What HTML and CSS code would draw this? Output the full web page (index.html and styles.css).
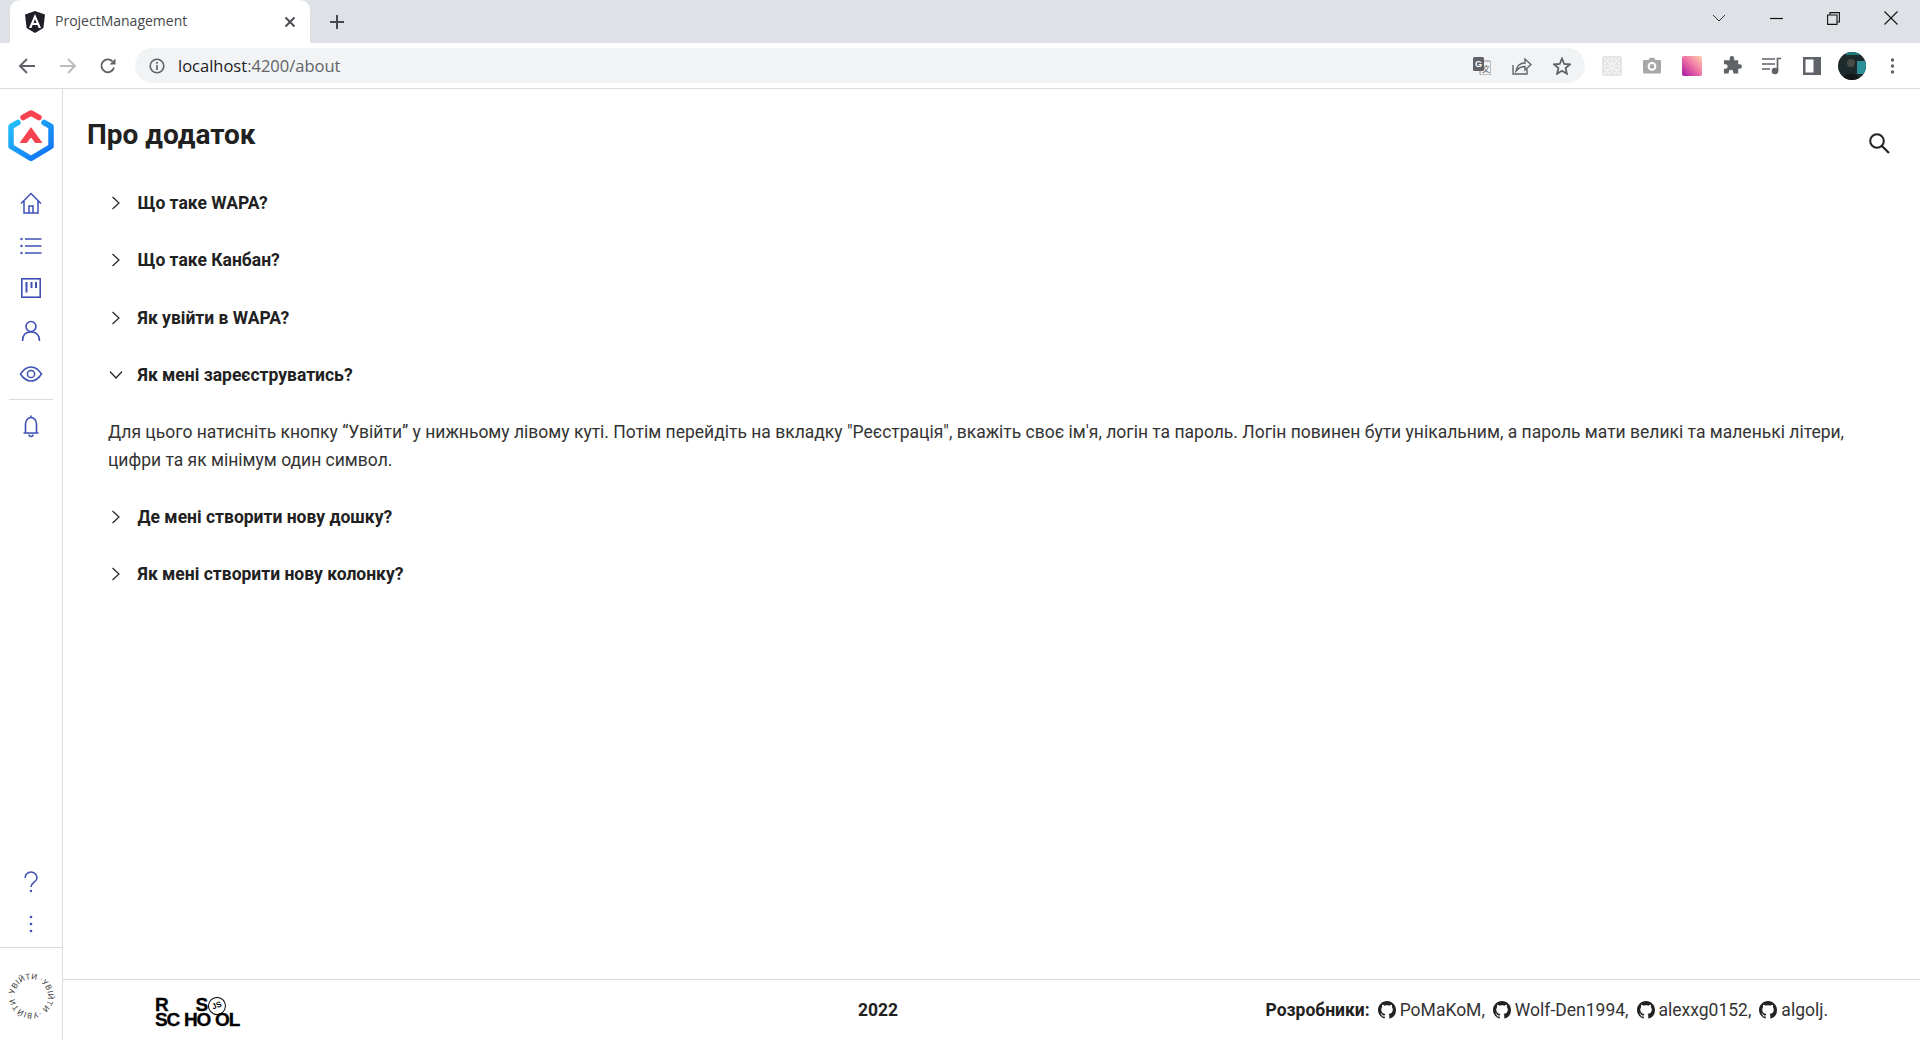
FILE: index.html
```html
<!DOCTYPE html>
<html lang="uk">
<head>
    <meta charset="UTF-8">
    <meta name="viewport" content="width=device-width, initial-scale=1.0">
    <title>ProjectManagement</title>
    <link rel="stylesheet" href="styles.css">
</head>
<body>
    <svg class="sprite">
        <symbol id="gh" viewBox="0 0 16 16"><path d="M8 0C3.580 0 0 3.580 0 8c0 3.540 2.290 6.530 5.470 7.590.4.070.55-.17.55-.38 0-.19-.01-.82-.01-1.490-2.010.37-2.530-.49-2.690-.94-.09-.23-.48-.94-.82-1.130-.28-.15-.68-.52-.01-.53.63-.01 1.080.58 1.230.82.720 1.210 1.870.87 2.330.66.070-.52.280-.87.510-1.070-1.780-.2-3.640-.89-3.640-3.950 0-.87.310-1.590.82-2.150-.08-.2-.36-1.020.08-2.120 0 0 .67-.21 2.200.82.640-.18 1.320-.27 2-.27s1.360.09 2 .27c1.530-1.040 2.200-.82 2.200-.82.440 1.100.16 1.920.08 2.120.51.560.82 1.270.82 2.150 0 3.070-1.870 3.750-3.650 3.950.29.250.54.730.54 1.480 0 1.070-.01 1.930-.01 2.200 0 .21.150.46.550.38A8.010 8.010 0 0 0 16 8c0-4.420-3.580-8-8-8z" fill="#222"/></symbol>
        <symbol id="chev-right" viewBox="0 0 14 14"><path d="M3.500 1 L10 7 L3.500 13" fill="none" stroke="#222" stroke-width="1.200"/></symbol>
        <symbol id="chev-down" viewBox="0 0 14 14"><path d="M1 3.500 L7 10 L13 3.500" fill="none" stroke="#222" stroke-width="1.200"/></symbol>
    </svg>

    <!-- browser chrome -->
    <div class="tabstrip">
        <div class="tab">
            <svg class="tab-favicon" viewBox="0 0 20 22" width="20" height="22">
                <path d="M10 0 L20 3.600 L18.400 17 L10 22 L1.600 17 L0 3.600 Z" fill="#1e1e26"/>
                <path d="M10 3 L4 17 H6.400 L7.600 14 H12.400 L13.600 17 H16 Z M8.500 12 L10 8 L11.500 12 Z" fill="#fff"/>
            </svg>
            <span class="tab-title">ProjectManagement</span>
            <svg class="tab-close" viewBox="0 0 12 12" width="12" height="12">
                <path d="M1.500 1.500 L10.500 10.500 M10.500 1.500 L1.500 10.500" stroke="#45484c" stroke-width="1.800"/>
            </svg>
        </div>
        <svg class="tab-new" viewBox="0 0 16 16" width="16" height="16">
            <path d="M8 1 V15 M1 8 H15" stroke="#45484c" stroke-width="2"/>
        </svg>
        <div class="window-btns">
            <svg viewBox="0 0 14 8" width="14" height="8"><path d="M1 1 L7 7 L13 1" fill="none" stroke="#333" stroke-width="1"/></svg>
            <svg viewBox="0 0 13 13" width="13" height="13"><path d="M0 6.500 H13" stroke="#111" stroke-width="1.200"/></svg>
            <svg viewBox="0 0 13 13" width="13" height="13"><path d="M0.600 3 H10 V12.400 H0.600 Z M3 3 V0.600 H12.400 V10 H10" fill="none" stroke="#111" stroke-width="1.100"/></svg>
            <svg viewBox="0 0 14 14" width="14" height="14"><path d="M0.500 0.500 L13.500 13.500 M13.500 0.500 L0.500 13.500" stroke="#111" stroke-width="1.100"/></svg>
        </div>
    </div>

    <div class="toolbar">
        <svg class="nav-btn" viewBox="0 0 18 18" width="18" height="18"><path d="M17 9 H2 M9 2 L2 9 L9 16" fill="none" stroke="#5f6368" stroke-width="1.900"/></svg>
        <svg class="nav-btn" viewBox="0 0 18 18" width="18" height="18"><path d="M1 9 H16 M9 2 L16 9 L9 16" fill="none" stroke="#babcbe" stroke-width="1.900"/></svg>
        <svg class="nav-btn" viewBox="0 0 18 18" width="18" height="18"><path d="M15 10.500 A6.400 6.400 0 1 1 13.500 4.400" fill="none" stroke="#5f6368" stroke-width="1.900"/><path d="M16.500 1.500 V7.500 H10.500 Z" fill="#5f6368"/></svg>
        <div class="omnibox">
            <svg viewBox="0 0 16 16" width="16" height="16"><circle cx="8" cy="8" r="6.800" fill="none" stroke="#5f6368" stroke-width="1.600"/><path d="M8 7 V12 M8 4 V5.800" stroke="#5f6368" stroke-width="1.700"/></svg>
            <div class="url"><span class="url-host">localhost</span>:4200/about</div>
            <div class="omnibox-actions">
                <svg viewBox="0 0 18 18" width="18" height="18">
                    <rect x="7" y="4" width="11" height="14" rx="1.500" fill="#f1f3f4" stroke="#8a8d91"/>
                    <rect x="0" y="0" width="11" height="14" rx="1.500" fill="#5f6368"/>
                    <text class="tr-g" x="5.500" y="10" text-anchor="middle">G</text>
                    <text class="tr-x" x="13" y="14.500" text-anchor="middle">文</text>
                </svg>
                <svg viewBox="0 0 20 18" width="20" height="18"><path d="M1 8 V17 H15 V12" fill="none" stroke="#5f6368" stroke-width="1.400"/><path d="M4 14 C5 8 9 6 13 6 V2 L19 7.500 L13 13 V9.500 C9 9.500 6.500 11 4 14 Z" fill="none" stroke="#5f6368" stroke-width="1.400"/></svg>
                <svg viewBox="0 0 18 18" width="18" height="18"><path d="M9 1.500 L11.200 6.800 L17 7.300 L12.600 11.100 L13.900 16.700 L9 13.700 L4.100 16.700 L5.400 11.100 L1 7.300 L6.800 6.800 Z" fill="none" stroke="#5f6368" stroke-width="1.800"/></svg>
            </div>
        </div>
        <div class="extensions">
            <svg viewBox="0 0 20 20" width="20" height="20"><rect width="20" height="20" rx="2" fill="#e4e4e4"/><path d="M2 2 L8 8 M8 2 L2 8 M12 2 L18 8 M18 2 L12 8 M2 12 L8 18 M8 12 L2 18 M12 12 L18 18 M18 12 L12 18 M2 10 H18 M10 2 V18" stroke="#f8f8f8" stroke-width="1.100"/><circle cx="10" cy="10" r="2.200" fill="#e4e4e4" stroke="#fff"/></svg>
            <svg viewBox="0 0 20 18" width="18" height="17"><path d="M1.500 3 H6 L7.500 0.500 H12.500 L14 3 H18.500 A1.500 1.500 0 0 1 20 4.500 V16.500 A1.500 1.500 0 0 1 18.500 18 H1.500 A1.500 1.500 0 0 1 0 16.500 V4.500 A1.500 1.500 0 0 1 1.500 3 Z" fill="#a8a8a8"/><circle cx="10" cy="10" r="4.800" fill="#fff"/><circle cx="10" cy="10" r="2.600" fill="#a8a8a8"/></svg>
            <div class="ext-gradient"></div>
            <svg viewBox="0 0 20 20" width="19" height="19"><path d="M7 2.500 A2.400 2.400 0 0 1 11.800 2.500 V4.500 H16 V8.600 H17.500 A2.400 2.400 0 0 1 17.500 13.400 H16 V18.500 H10.800 V17 A2.400 2.400 0 0 0 6 17 V18.500 H1 V13.500 H2.500 A2.400 2.400 0 0 0 2.500 8.700 H1 V4.500 H7 Z" fill="#5f6368"/></svg>
            <svg viewBox="0 0 20 18" width="20" height="18"><path d="M0 2 H13 M0 7 H13 M0 12 H8" stroke="#5f6368" stroke-width="1.700"/><circle cx="13" cy="14" r="3.300" fill="#5f6368"/><path d="M15.500 14 V1.500 H19" fill="none" stroke="#5f6368" stroke-width="1.700"/></svg>
            <svg viewBox="0 0 18 18" width="18" height="18"><rect x="0" y="0" width="18" height="18" fill="#5f6368"/><rect x="2.500" y="2.500" width="8" height="13" fill="#fff"/></svg>
            <div class="avatar">
                <svg viewBox="0 0 28 28" width="28" height="28">
                    <rect width="28" height="28" fill="#1d2a2c"/>
                    <rect x="19" y="9" width="9" height="13" fill="#2b8f96"/>
                    <rect x="8" y="0" width="14" height="3" fill="#1c7a78"/>
                    <circle cx="13" cy="11" r="4" fill="#4a4a44"/>
                    <path d="M5 28 C6 19 20 19 21 28 Z" fill="#14181a"/>
                </svg>
            </div>
            <svg viewBox="0 0 4 16" width="5" height="16"><circle cx="2" cy="2" r="1.700" fill="#5f6368"/><circle cx="2" cy="8" r="1.700" fill="#5f6368"/><circle cx="2" cy="14" r="1.700" fill="#5f6368"/></svg>
        </div>
    </div>

    <!-- app -->
    <div class="app">
        <aside class="sidebar">
            <svg class="logo" viewBox="0 0 46 52" width="46" height="52">
                <defs>
                    <linearGradient id="hexGrad" x1="0" y1="0" x2="1" y2="1">
                        <stop offset="0" stop-color="#25c0fb"/>
                        <stop offset="1" stop-color="#0f6cf5"/>
                    </linearGradient>
                </defs>
                <path d="M10 12.500 L3 16.500 V36.500 L23 48.500 L43 36.500 V16.500 L36 12.500" fill="none" stroke="url(#hexGrad)" stroke-width="5.500" stroke-linejoin="round" stroke-linecap="round"/>
                <path d="M15 7.500 L23 3 L31 7.500" fill="none" stroke="#f7434f" stroke-width="5.500" stroke-linecap="round" stroke-linejoin="round"/>
                <path d="M23 18 L33.500 32.500 H27.500 L23 26.500 L18.500 32.500 H12.500 Z" fill="#f7434f" stroke="#f7434f" stroke-width="1.200" stroke-linejoin="round"/>
            </svg>
            <nav class="side-nav">
                <svg viewBox="0 0 24 24" width="24" height="24"><path d="M2 12.500 L12 2.500 L22 12.500 M5 10 V22 H19 V10 M10 22 V15 H14 V22" fill="none" stroke="#3f51b5" stroke-width="1.500"/></svg>
                <svg viewBox="0 0 24 24" width="24" height="24"><path d="M6 5 H22.500 M6 12 H22.500 M6 19 H22.500" stroke="#3f51b5" stroke-width="1.500"/><circle cx="2.500" cy="5" r="1.200" fill="#3f51b5"/><circle cx="2.500" cy="12" r="1.200" fill="#3f51b5"/><circle cx="2.500" cy="19" r="1.200" fill="#3f51b5"/></svg>
                <svg viewBox="0 0 24 24" width="24" height="24"><rect x="2.800" y="2.800" width="18.400" height="18.400" fill="none" stroke="#3f51b5" stroke-width="1.600"/><path d="M7.500 6 V16.500 M12.500 6 V12 M17 6 V12" stroke="#3f51b5" stroke-width="2"/></svg>
                <svg viewBox="0 0 24 24" width="24" height="24"><circle cx="12" cy="7.500" r="5" fill="none" stroke="#3f51b5" stroke-width="1.600"/><path d="M3.500 22 C3.500 15.500 7.500 13 12 13 C16.500 13 20.500 15.500 20.500 22" fill="none" stroke="#3f51b5" stroke-width="1.600"/></svg>
                <svg viewBox="0 0 24 24" width="24" height="24"><path d="M1.500 12 C5 6.500 8.500 5 12 5 C15.500 5 19 6.500 22.500 12 C19 17.500 15.500 19 12 19 C8.500 19 5 17.500 1.500 12 Z" fill="none" stroke="#3f51b5" stroke-width="1.500"/><circle cx="12" cy="12" r="3.600" fill="none" stroke="#3f51b5" stroke-width="1.500"/></svg>
            </nav>
            <div class="side-divider"></div>
            <svg class="side-bell" viewBox="0 0 24 24" width="24" height="24"><path d="M4.500 19 H19.500 M6.500 19 V10 A5.500 6.500 0 0 1 17.500 10 V19 M12 1.500 V3.500" fill="none" stroke="#3f51b5" stroke-width="1.600"/><path d="M10 20.500 A2 2 0 0 0 14 20.500" fill="none" stroke="#3f51b5" stroke-width="1.500"/></svg>
            <div class="side-spacer"></div>
            <svg class="side-help" viewBox="0 0 24 24" width="24" height="24"><path d="M6 8 A6 6 0 0 1 18 8 C18 12 12 12.500 12 17" fill="none" stroke="#3f51b5" stroke-width="1.600"/><circle cx="12" cy="21" r="1.200" fill="#3f51b5"/></svg>
            <svg class="side-more" viewBox="0 0 4 18" width="4" height="18"><circle cx="2" cy="2" r="1.300" fill="#3f51b5"/><circle cx="2" cy="9" r="1.300" fill="#3f51b5"/><circle cx="2" cy="16" r="1.300" fill="#3f51b5"/></svg>
            <div class="login">
                <svg class="login-ring" viewBox="0 0 46 46" width="46" height="46">
                    <defs><path id="loginCircle" d="M6.500 25 a16.700 16.700 0 1 1 33.400 -2 a16.700 16.700 0 1 1 -33.400 2"/></defs>
                    <text class="login-text"><textPath href="#loginCircle" textLength="103">·УВІЙТИ ·УВІЙТИ ·УВІЙТИ </textPath></text>
                </svg>
            </div>
        </aside>

        <div class="main">
            <header class="page-header">
                <h1>Про додаток</h1>
                <svg class="search" viewBox="0 0 24 24" width="24" height="24"><circle cx="10" cy="10" r="6.800" fill="none" stroke="#222" stroke-width="2"/><path d="M15 15 L22 22" stroke="#222" stroke-width="2.200"/></svg>
            </header>

            <div class="faq">
                <div class="faq-item">
                    <svg width="14" height="14"><use href="#chev-right"/></svg>
                    <span>Що таке WAPA?</span>
                </div>
                <div class="faq-item">
                    <svg width="14" height="14"><use href="#chev-right"/></svg>
                    <span>Що таке Канбан?</span>
                </div>
                <div class="faq-item">
                    <svg width="14" height="14"><use href="#chev-right"/></svg>
                    <span>Як увійти в WAPA?</span>
                </div>
                <div class="faq-item">
                    <svg width="14" height="14"><use href="#chev-down"/></svg>
                    <span>Як мені зареєструватись?</span>
                </div>
                <p class="faq-answer">Для цього натисніть кнопку “Увійти” у нижньому лівому куті. Потім перейдіть на вкладку "Реєстрація", вкажіть своє ім'я, логін та пароль. Логін повинен бути унікальним, а пароль мати великі та маленькі літери, цифри та як мінімум один символ.</p>
                <div class="faq-item">
                    <svg width="14" height="14"><use href="#chev-right"/></svg>
                    <span>Де мені створити нову дошку?</span>
                </div>
                <div class="faq-item">
                    <svg width="14" height="14"><use href="#chev-right"/></svg>
                    <span>Як мені створити нову колонку?</span>
                </div>
            </div>

            <footer class="footer">
                <div class="rs-logo">
                    <div class="rs-line"><span class="rs-r">R</span><span class="rs-s">S</span><span class="rs-js">JS</span></div>
                    <div class="rs-line rs-bottom"><span>SC</span><span>HO</span><span>OL</span></div>
                </div>
                <div class="year">2022</div>
                <div class="devs">
                    <b>Розробники:</b>
                    <span class="dev"><svg width="18" height="18"><use href="#gh"/></svg>PoMaKoM,</span>
                    <span class="dev"><svg width="18" height="18"><use href="#gh"/></svg>Wolf-Den1994,</span>
                    <span class="dev"><svg width="18" height="18"><use href="#gh"/></svg>alexxg0152,</span>
                    <span class="dev"><svg width="18" height="18"><use href="#gh"/></svg>algolj.</span>
                </div>
            </footer>
        </div>
    </div>
</body>
</html>
```

FILE: styles.css
```css
html, body {
    height: 100%;
}
body {
    margin: 0;
    font-family: Roboto, "Liberation Sans", sans-serif;
    color: #212121;
    background: #fff;
    overflow: hidden;
    display: flex;
    flex-direction: column;
}
svg {
    display: block;
    flex-shrink: 0;
}
.sprite {
    display: none;
}

/* browser chrome */
.tabstrip {
    height: 43px;
    background: #dee1e6;
    display: flex;
    align-items: center;
    flex-shrink: 0;
}
.tab {
    width: 300px;
    height: 43px;
    margin-left: 10px;
    padding: 0 14px 0 15px;
    box-sizing: border-box;
    background: #fff;
    border-radius: 10px 10px 0 0;
    display: flex;
    align-items: center;
}
.tab-favicon {
    margin-right: 10px;
}
.tab-title {
    flex: 1;
    margin-bottom: 2px;
    font-family: "Open Sans", "Noto Sans", sans-serif;
    font-size: 14px;
    color: #45484c;
}
.tab-new {
    margin-left: 19px;
}
.window-btns {
    margin-left: auto;
    align-self: flex-start;
    padding: 11px 22px 0 0;
    display: flex;
    align-items: center;
    gap: 44px;
}
.toolbar {
    height: 45px;
    background: #fff;
    border-bottom: 1px solid #dadce0;
    display: flex;
    align-items: center;
    padding-left: 18px;
    flex-shrink: 0;
}
.nav-btn {
    margin-right: 22.500px;
}
.omnibox {
    flex: 1;
    height: 35px;
    margin-left: -4.500px;
    padding: 0 14px;
    box-sizing: border-box;
    background: #f1f3f4;
    border-radius: 18px;
    display: flex;
    align-items: center;
}
.url {
    margin-left: 13px;
    font-family: "Open Sans", "Noto Sans", sans-serif;
    font-size: 16.500px;
    color: #5f6368;
}
.url-host {
    color: #202124;
}
.omnibox-actions {
    margin-left: auto;
    display: flex;
    align-items: center;
    gap: 21px;
}
.tr-g {
    font-family: "Liberation Sans", sans-serif;
    font-size: 9px;
    font-weight: 700;
    fill: #fff;
}
.tr-x {
    font-family: "Noto Sans CJK SC", sans-serif;
    font-size: 8px;
    fill: #5f6368;
}
.extensions {
    width: 335px;
    padding-left: 7px;
    box-sizing: border-box;
    display: grid;
    grid-template-columns: repeat(8, 40px);
    justify-items: center;
    align-items: center;
    flex-shrink: 0;
}
.ext-gradient {
    width: 20px;
    height: 20px;
    border-radius: 2px;
    background: linear-gradient(45deg, #a5159f 0%, #f06fa6 50%, #ffd3b0 100%);
}
.avatar {
    width: 28px;
    height: 28px;
    border-radius: 50%;
    overflow: hidden;
}

/* app */
.app {
    flex: 1;
    display: flex;
    min-height: 0;
}
.sidebar {
    width: 63px;
    box-sizing: border-box;
    border-right: 1px solid #dcdcdc;
    display: flex;
    flex-direction: column;
    align-items: center;
    flex-shrink: 0;
}
.logo {
    margin-top: 21px;
}
.side-nav {
    margin-top: 29px;
    display: flex;
    flex-direction: column;
    gap: 18.700px;
}
.side-divider {
    width: 44px;
    height: 1px;
    margin-top: 13px;
    background: #dcdcdc;
}
.side-bell {
    margin-top: 14px;
}
.side-spacer {
    flex: 1;
}
.side-help {
    margin-bottom: 21px;
}
.side-more {
    margin-bottom: 14px;
}
.login {
    width: 100%;
    height: 93px;
    border-top: 1px solid #dcdcdc;
    box-sizing: border-box;
    display: flex;
    justify-content: center;
    padding-top: 24px;
}
.login-ring {
    overflow: visible;
}
.login-text {
    font-size: 8px;
    fill: #444;
}

.main {
    flex: 1;
    min-width: 0;
    display: flex;
    flex-direction: column;
}
.page-header {
    height: 85px;
    padding: 0 29px 0 24px;
    display: flex;
    justify-content: space-between;
}
.page-header h1 {
    margin: 0;
    padding-top: 24px;
    font-size: 28px;
    line-height: 44px;
    font-weight: 700;
}
.search {
    margin-top: 42px;
}
.faq {
    flex: 1;
    padding: 0 40px 0 45px;
}
.faq-item {
    height: 57.500px;
    display: flex;
    align-items: center;
    font-weight: 700;
    font-size: 17.500px;
}
.faq-item svg {
    margin-left: 1px;
    margin-right: 14.500px;
}
.faq-answer {
    margin: 0 0 14px;
    padding-top: 14px;
    font-size: 17.500px;
    line-height: 28px;
    color: #333;
}

.footer {
    height: 61px;
    box-sizing: border-box;
    border-top: 1px solid #dcdcdc;
    padding: 0 92px;
    display: flex;
    align-items: center;
    font-size: 17.500px;
    flex-shrink: 0;
}
.rs-logo {
    width: 84px;
    padding-top: 4px;
    font-family: "Liberation Sans", sans-serif;
    font-weight: 700;
    font-size: 19px;
    line-height: 15px;
    letter-spacing: -1.200px;
    color: #000;
    -webkit-text-stroke: 0.300px #000;
}
.rs-line {
    height: 15px;
    display: flex;
    align-items: center;
}
.rs-r {
    margin-right: 28px;
}
.rs-js {
    width: 18px;
    height: 18px;
    margin-left: 1px;
    box-sizing: border-box;
    border: 1px solid #000;
    border-radius: 50%;
    flex-shrink: 0;
    font-size: 8px;
    line-height: 16px;
    letter-spacing: 0;
    text-align: center;
    -webkit-text-stroke: 0;
    transform: translateY(1px) rotate(-20deg);
}
.rs-bottom {
    gap: 5px;
}
.year {
    margin-left: 619px;
    font-weight: 700;
}
.devs {
    margin-left: auto;
    display: flex;
    align-items: center;
    gap: 8px;
    color: #333;
}
.devs b {
    color: #212121;
}
.dev {
    display: flex;
    align-items: center;
    gap: 4px;
}
```
